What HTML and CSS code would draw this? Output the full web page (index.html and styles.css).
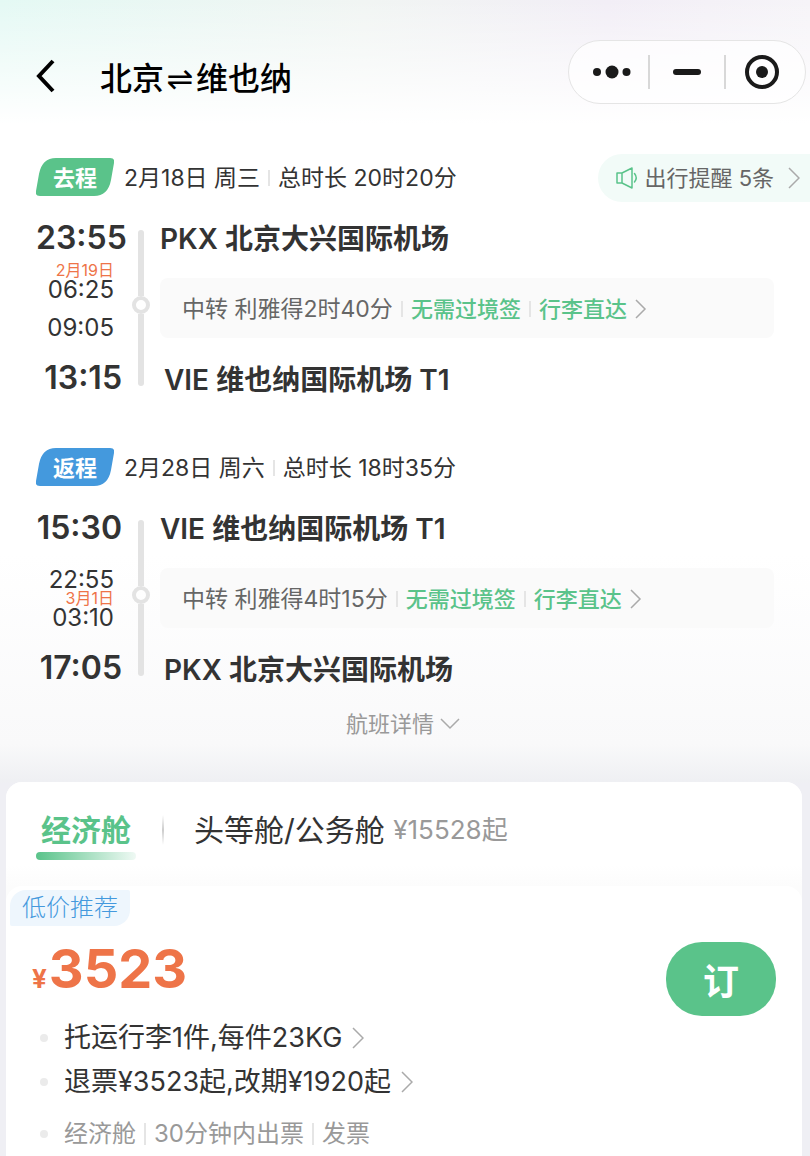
FILE: index.html
```html
<!DOCTYPE html>
<html lang="zh-CN">
<head>
    <meta charset="UTF-8">
    <meta name="viewport" content="width=device-width, initial-scale=1.0">
    <title>北京⇌维也纳</title>
    <link rel="stylesheet" href="styles.css">
</head>
<body>
    <header class="navbar">
        <button class="back" type="button" aria-label="返回">
            <svg width="20" height="34" viewBox="0 0 20 34" fill="none" stroke="#000" stroke-width="4"><path d="M17 2 3 17 17 32"/></svg>
        </button>
        <h1>北京<span class="swap">⇌</span>维也纳</h1>
        <div class="capsule">
            <button type="button" aria-label="更多">
                <svg width="38" height="14" viewBox="0 0 38 14" fill="#1a1a1a"><circle cx="4" cy="7" r="4"/><circle cx="19" cy="7" r="6.5"/><circle cx="33.500" cy="7" r="4"/></svg>
            </button>
            <button type="button" aria-label="最小化">
                <svg width="28" height="6" viewBox="0 0 28 6"><rect width="28" height="6" rx="3" fill="#1a1a1a"/></svg>
            </button>
            <button type="button" aria-label="关闭">
                <svg width="34" height="34" viewBox="0 0 34 34"><circle cx="17" cy="17" r="15" fill="none" stroke="#1a1a1a" stroke-width="4"/><circle cx="17" cy="17" r="6" fill="#1a1a1a"/></svg>
            </button>
        </div>
    </header>

    <main>
        <section class="trip">
            <div class="trip-head">
                <span class="badge">
                    <svg class="badge-bg" viewBox="0 0 78 38" preserveAspectRatio="none"><path d="M20 0H74Q79 0 78 5L75 22Q72 38 58 38H4Q-1 38 0 33L3 16Q6 0 20 0Z" fill="#5ac38a"/></svg>
                    <b>去程</b>
                </span>
                <span>2月18日 周三</span>
                <i class="sep"></i>
                <span>总时长 20时20分</span>
                <a class="notice" href="#">
                    <svg width="22" height="22" viewBox="0 0 22 22" fill="none" stroke="#5ac38a" stroke-width="1.500" stroke-linejoin="round" stroke-linecap="round"><path d="M6 6H1V16H6M6 6V16L16 21V1Z"/><path d="M18.500 6.500Q22 11 18.500 15"/></svg>
                    <span>出行提醒 5条</span>
                    <svg class="arrow" width="12" height="22" viewBox="0 0 12 22"><path d="M1 1 11 11 1 21"/></svg>
                </a>
            </div>
            <div class="route">
                <time class="time">23:55</time>
                <div class="line"><i></i><b></b><i></i></div>
                <h2>PKX 北京大兴国际机场</h2>
                <div class="stops">
                    <span class="date">2月19日</span>
                    <time class="arrive">06:25</time>
                    <time class="depart">09:05</time>
                </div>
                <a class="transfer" href="#">
                    <span>中转 利雅得2时40分</span>
                    <i class="sep"></i>
                    <span class="green">无需过境签</span>
                    <i class="sep"></i>
                    <span class="green">行李直达</span>
                    <svg class="arrow" width="12" height="20" viewBox="0 0 12 20"><path d="M1 1 10 10 1 19"/></svg>
                </a>
                <time class="time">13:15</time>
                <h2 class="end">VIE 维也纳国际机场 T1</h2>
            </div>
        </section>

        <section class="trip">
            <div class="trip-head">
                <span class="badge">
                    <svg class="badge-bg" viewBox="0 0 78 38" preserveAspectRatio="none"><path d="M20 0H74Q79 0 78 5L75 22Q72 38 58 38H4Q-1 38 0 33L3 16Q6 0 20 0Z" fill="#4499dd"/></svg>
                    <b>返程</b>
                </span>
                <span>2月28日 周六</span>
                <i class="sep"></i>
                <span>总时长 18时35分</span>
            </div>
            <div class="route">
                <time class="time">15:30</time>
                <div class="line"><i></i><b></b><i></i></div>
                <h2>VIE 维也纳国际机场 T1</h2>
                <div class="stops">
                    <time class="arrive">22:55</time>
                    <span class="date next-day">3月1日</span>
                    <time class="depart">03:10</time>
                </div>
                <a class="transfer" href="#">
                    <span>中转 利雅得4时15分</span>
                    <i class="sep"></i>
                    <span class="green">无需过境签</span>
                    <i class="sep"></i>
                    <span class="green">行李直达</span>
                    <svg class="arrow" width="12" height="20" viewBox="0 0 12 20"><path d="M1 1 10 10 1 19"/></svg>
                </a>
                <time class="time">17:05</time>
                <h2 class="end">PKX 北京大兴国际机场</h2>
            </div>
        </section>

        <button class="detail" type="button">
            航班详情
            <svg class="arrow" width="20" height="12" viewBox="0 0 20 12"><path d="M1 1 10 10 19 1"/></svg>
        </button>

        <section class="cabins">
            <div class="tabs">
                <button class="tab active" type="button">经济舱</button>
                <i class="tab-sep"></i>
                <button class="tab" type="button">头等舱/公务舱 <small>¥15528起</small></button>
            </div>
            <div class="fare">
                <span class="label">低价推荐</span>
                <div class="fare-top">
                    <p class="price"><small>¥</small>3523</p>
                    <button class="book" type="button">订</button>
                </div>
                <ul>
                    <li><a href="#">托运行李1件,每件23KG <svg class="arrow" width="12" height="22" viewBox="0 0 12 22"><path d="M1 1 11 11 1 21"/></svg></a></li>
                    <li><a href="#">退票¥3523起,改期¥1920起 <svg class="arrow" width="12" height="22" viewBox="0 0 12 22"><path d="M1 1 11 11 1 21"/></svg></a></li>
                    <li class="info">经济舱<i class="sep"></i>30分钟内出票<i class="sep"></i>发票</li>
                </ul>
            </div>
        </section>
    </main>
</body>
</html>
```
FILE: styles.css
```css
* {
    box-sizing: border-box;
}

body {
    margin: 0;
    min-height: 100vh;
    display: flex;
    flex-direction: column;
    font-family: Inter, "Noto Sans CJK SC", sans-serif;
    font-size: 23px;
    line-height: 32px;
    color: #333;
    background-color: #efeff4;
    overflow-x: hidden;
}

h1, h2, p, ul {
    margin: 0;
    padding: 0;
}

button {
    padding: 0;
    border: none;
    background: none;
    font-family: inherit;
    color: inherit;
    cursor: pointer;
}

a {
    color: inherit;
    text-decoration: none;
}

svg {
    display: block;
    flex: none;
}

.arrow {
    fill: none;
    stroke: #aaa;
    stroke-width: 1.5;
}

.sep {
    width: 2px;
    height: 16px;
    background-color: #e5e5e5;
}

/* top bar */
.navbar {
    display: flex;
    align-items: center;
    padding: 40px 4px 20px 36px;
    background: linear-gradient(to bottom, rgba(255, 255, 255, 0), #fff), linear-gradient(to right, #e4f9f4, #f1f5f3 45%, #f2eef6 75%, #f6f4f8);
}

.back {
    width: 64px;
    padding-top: 8px;
}

h1 {
    padding-top: 14px;
    font-size: 32px;
    line-height: 40px;
    font-weight: 500;
    color: #000;
}

.swap {
    display: inline-block;
    width: 32px;
    font-family: "DejaVu Sans", sans-serif;
    font-weight: 400;
    text-align: center;
}

.capsule {
    display: flex;
    align-items: center;
    width: 238px;
    height: 64px;
    margin-left: auto;
    padding: 0 6px;
    border: 1px solid #e5e5e5;
    border-radius: 32px;
    background-color: rgba(255, 255, 255, 0.7);
}

.capsule button {
    display: flex;
    flex: 1;
    height: 34px;
    align-items: center;
    justify-content: center;
}

.capsule button + button {
    border-left: 2px solid #d8d8d8;
}

main {
    display: flex;
    flex-direction: column;
    flex: 1;
    background: linear-gradient(to bottom, #fff 430px, #f9f9fa 620px, #eff0f3 656px, #efeff4 660px);
}

/* flights */
.trip {
    padding: 30px 0 16px 36px;
}

.trip-head {
    display: flex;
    align-items: center;
    gap: 8px;
    height: 48px;
}

.badge {
    display: grid;
    width: 78px;
    height: 38px;
    margin: 0 2px 2px 0;
    place-items: center;
    font-size: 22px;
    color: #fff;
}

.badge > * {
    grid-area: 1 / 1;
}

.badge-bg {
    width: 100%;
    height: 100%;
}

.badge b {
    padding-top: 2px;
}

.notice {
    display: flex;
    align-items: center;
    gap: 6px;
    height: 48px;
    margin-left: auto;
    padding: 0 10px 0 18px;
    border-radius: 24px 0 0 24px;
    background-color: #f2fbf8;
    font-size: 22px;
    color: #666;
}

.notice .arrow {
    margin-left: 8px;
}

.route {
    display: grid;
    grid-template-columns: 86px 18px 1fr;
    grid-template-rows: 40px 100px 40px;
    column-gap: 10px;
    align-items: center;
    margin-top: 16px;
    padding-right: 36px;
}

.time {
    grid-column: 1;
    font-size: 32px;
    font-weight: 600;
    text-align: right;
}

h2 {
    grid-column: 3;
    padding-top: 2px;
    font-size: 28px;
    line-height: 40px;
    font-weight: 600;
}

h2.end {
    padding: 4px 0 0 4px;
}

.line {
    grid-area: 1 / 2 / 4 / 3;
    display: flex;
    flex-direction: column;
    align-items: center;
    height: 156px;
}

.line i {
    flex: 11;
    width: 6px;
    border-radius: 3px 3px 0 0;
    background-color: #e3e3e3;
}

.line b {
    width: 18px;
    height: 18px;
    border: 4px solid #e3e3e3;
    border-radius: 50%;
}

.line b + i {
    flex: 12;
    border-radius: 0 0 3px 3px;
}

.stops {
    grid-column: 1;
    display: grid;
    grid-template-rows: repeat(4, 19px);
    align-self: start;
    padding: 3px 8px 0 0;
    font-size: 24px;
    line-height: 19px;
    text-align: right;
}

.arrive {
    grid-row: 2;
}

.depart {
    grid-row: 4;
}

.date {
    grid-row: 1;
    font-size: 16px;
    color: #ee7448;
}

.next-day {
    grid-row: 3;
}

.transfer {
    grid-column: 3;
    display: flex;
    align-items: center;
    gap: 8px;
    height: 60px;
    padding: 2px 22px 0;
    border-radius: 8px;
    background-color: #fafafa;
    color: #666;
}

.green {
    font-size: 22px;
    font-weight: 500;
    color: #5ac38a;
}

.detail {
    display: flex;
    align-items: center;
    align-self: center;
    gap: 6px;
    margin: 4px 0 42px;
    padding-right: 4px;
    font-size: 22px;
    line-height: 32px;
    color: #999;
}

/* cabins and fares */
.cabins {
    display: flex;
    flex-direction: column;
    flex: 1;
    margin: 0 8px 0 6px;
    border-radius: 16px 16px 0 0;
    background-color: #fcfcfc;
}

.tabs {
    display: flex;
    align-items: center;
    height: 104px;
    padding: 0 30px 8px;
    border-radius: 16px 16px 0 0;
    background: linear-gradient(to bottom, #fff 80%, #fcfcfc);
}

.tab {
    font-size: 30px;
    line-height: 40px;
}

.tab.active {
    width: 100px;
    padding-top: 10px;
    font-weight: 700;
    color: #5ac38a;
}

.tab.active::after {
    content: "";
    display: block;
    height: 8px;
    margin-top: 2px;
    border-radius: 4px;
    background: linear-gradient(to right, #5ac38a, #eff9f4);
}

.tab-sep {
    width: 2px;
    height: 30px;
    margin: 0 30px 0 26px;
    background: linear-gradient(to bottom, #fff, #ccc, #fff);
}

.tab small {
    font-size: 26px;
    color: #999;
    vertical-align: 2px;
}

.fare {
    flex: 1;
    padding: 4px 26px 6px 4px;
    border-radius: 16px 16px 0 0;
    background-color: #fff;
}

.label {
    display: block;
    width: max-content;
    padding: 0 12px;
    border-radius: 16px 2px 16px 2px;
    background-color: #eef6fd;
    font-size: 24px;
    line-height: 36px;
    font-weight: 300;
    color: #4499dd;
}

.fare-top {
    display: flex;
    align-items: flex-start;
    justify-content: space-between;
    padding: 16px 0 0 22px;
}

.price {
    font-size: 54px;
    line-height: 54px;
    font-weight: 700;
    color: #ee7448;
}

.price small {
    margin-right: 2px;
    font-size: 26px;
}

.book {
    width: 110px;
    height: 74px;
    border-radius: 36px;
    background-color: #5ac38a;
    font-size: 36px;
    font-weight: 700;
    color: #fff;
}

ul {
    list-style: none;
    font-size: 27px;
}

li {
    display: flex;
    align-items: center;
    height: 44px;
    padding-left: 30px;
}

li::before {
    content: "";
    width: 8px;
    height: 8px;
    margin-right: 16px;
    border-radius: 50%;
    background-color: #ebebeb;
}

li a {
    display: flex;
    align-items: center;
    gap: 10px;
}

.info {
    gap: 8px;
    margin-top: 8px;
    font-size: 24px;
    color: #999;
}

.info::before {
    margin-right: 8px;
}

.info .sep {
    height: 22px;
}
```
